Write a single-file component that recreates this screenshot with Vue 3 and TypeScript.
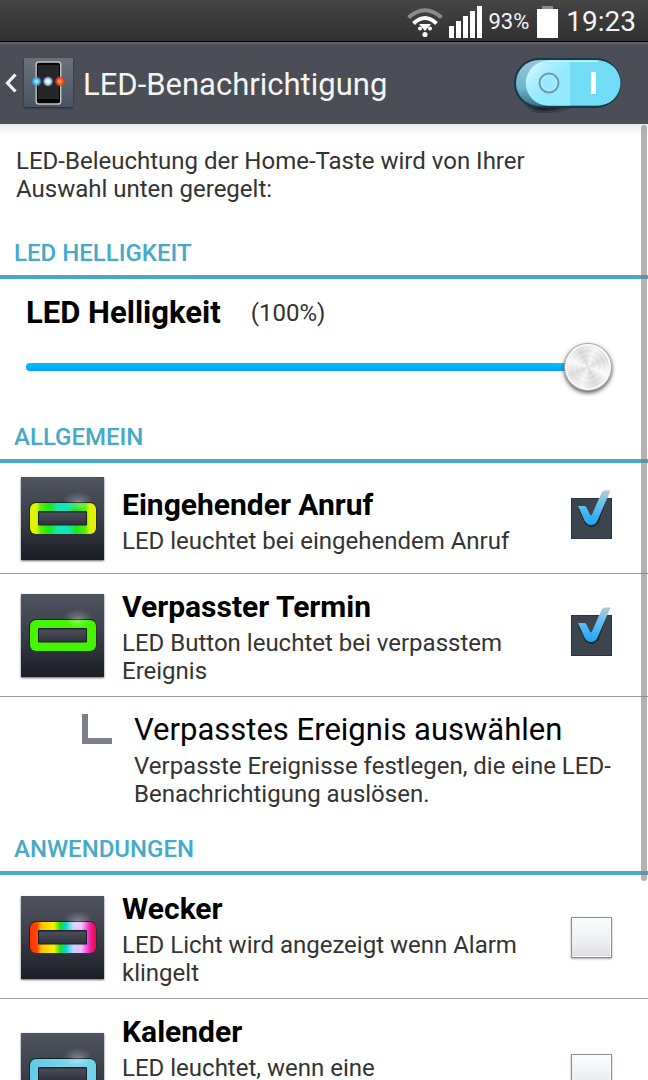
<script setup lang="ts">
import { computed, ref } from 'vue'

interface Stop { at: number; color: string }
interface Item {
  id: string
  title: string
  text: string
  on: boolean
  stops: Stop[]
}

const green: Stop[] = [
  { at: 0, color: '#45f500' },
  { at: 100, color: '#45f500' },
]
const call: Stop[] = [
  { at: 0, color: '#e8f000' },
  { at: 10, color: '#d8f500' },
  { at: 16, color: '#58f000' },
  { at: 30, color: '#1be61a' },
  { at: 42, color: '#10e8b8' },
  { at: 58, color: '#10e8b8' },
  { at: 70, color: '#1be61a' },
  { at: 84, color: '#58f000' },
  { at: 90, color: '#d8f500' },
  { at: 100, color: '#e8f000' },
]
const rainbow: Stop[] = [
  { at: 0, color: '#ff3000' },
  { at: 11, color: '#ff4a00' },
  { at: 17, color: '#ffc000' },
  { at: 36, color: '#fff000' },
  { at: 46, color: '#20e020' },
  { at: 54, color: '#00d8d0' },
  { at: 66, color: '#c8d4ff' },
  { at: 78, color: '#f0b8ff' },
  { at: 89, color: '#f030c8' },
  { at: 95, color: '#f01070' },
  { at: 100, color: '#f00c38' },
]
const sky: Stop[] = [
  { at: 0, color: '#62cbe6' },
  { at: 65, color: '#7fd6ee' },
  { at: 100, color: '#70d0ea' },
]

const general = ref<Item[]>([
  { id: 'call', title: 'Eingehender Anruf', text: 'LED leuchtet bei eingehendem Anruf', on: true, stops: call },
  { id: 'missed', title: 'Verpasster Termin', text: 'LED Button leuchtet bei verpasstem Ereignis', on: true, stops: green },
])
const apps = ref<Item[]>([
  { id: 'alarm', title: 'Wecker', text: 'LED Licht wird angezeigt wenn Alarm klingelt', on: false, stops: rainbow },
  { id: 'calendar', title: 'Kalender', text: 'LED leuchtet, wenn eine Kalenderbenachrichtigung ausgelöst wird', on: false, stops: sky },
])
const groups = computed(() => [
  { name: 'Allgemein', items: general.value, sub: true },
  { name: 'Anwendungen', items: apps.value, sub: false },
])

const brightness = ref(100)
const enabled = ref(true)
</script>

<template>
  <div class="screen">
    <div class="status">
      <svg class="wifi" width="36" height="30" viewBox="0 0 36 30">
        <path d="M1.500 9.500Q18 -5 34.500 9.500" fill="none" stroke="#8b8b8b" stroke-width="4" />
        <path d="M6.500 15.500Q18 4.500 29.500 15.500" fill="none" stroke="#fff" stroke-width="4" />
        <path d="M12 16H24L18 23Z" fill="#fff" />
        <circle cx="13" cy="20.500" r="2" fill="#fff" />
        <circle cx="23" cy="20.500" r="2" fill="#fff" />
        <circle cx="18" cy="26.500" r="2.600" fill="#fff" />
      </svg>
      <svg class="signal" width="33" height="32" viewBox="0 0 33 32">
        <path d="M0 20h5v12H0zM7 15h5v17H7zM14 10h5v22h-5zM21 5h5v27h-5zM28 0h5v32h-5z" fill="#fff" />
      </svg>
      <span class="percent">93%</span>
      <svg class="battery" width="21" height="32" viewBox="0 0 21 32">
        <path d="M5 0h11v3H5z" fill="#8b8b8b" />
        <path d="M0 3h21v29H0z" fill="#fff" />
      </svg>
      <span class="time">19:23</span>
    </div>

    <header class="bar">
      <button class="back" type="button" aria-label="Zurück">
        <svg width="12" height="20" viewBox="0 0 12 20">
          <path d="M10.500 1.500L2.500 10L10.500 18.500" fill="none" stroke="#f2f2f2" stroke-width="3.200" />
        </svg>
      </button>
      <svg class="appicon" width="49" height="49" viewBox="0 0 49 49">
        <defs>
          <linearGradient id="tile" x1="0" y1="0" x2="0" y2="1">
            <stop offset="0" stop-color="#6a717b" />
            <stop offset="1" stop-color="#495462" />
          </linearGradient>
          <radialGradient id="orbBlue">
            <stop offset="0" stop-color="#b8ecff" />
            <stop offset="0.600" stop-color="#4cb8e8" />
            <stop offset="1" stop-color="#2a90c8" stop-opacity="0.400" />
          </radialGradient>
          <radialGradient id="orbWhite">
            <stop offset="0" stop-color="#fff" />
            <stop offset="0.550" stop-color="#b4e6f5" />
            <stop offset="1" stop-color="#9a80d8" stop-opacity="0.500" />
          </radialGradient>
          <radialGradient id="orbRed">
            <stop offset="0" stop-color="#ffb060" />
            <stop offset="0.500" stop-color="#ff6010" />
            <stop offset="1" stop-color="#e02808" stop-opacity="0.600" />
          </radialGradient>
        </defs>
        <rect width="49" height="49" fill="url(#tile)" />
        <rect x="12.200" y="4" width="24.500" height="42" rx="2.500" fill="#050505" stroke="#c4c6c8" stroke-width="1.400" />
        <rect x="14" y="7" width="21" height="34" fill="#252628" />
        <circle cx="12.500" cy="23.500" r="5" fill="url(#orbBlue)" />
        <circle cx="24" cy="23.500" r="5" fill="url(#orbWhite)" />
        <circle cx="36" cy="23.500" r="5" fill="url(#orbRed)" />
      </svg>
      <h1>LED-Benachrichtigung</h1>
      <button class="switch" :class="{ off: !enabled }" type="button" role="switch" :aria-checked="enabled" aria-label="LED-Benachrichtigung" @click="enabled = !enabled">
        <svg width="108" height="60" viewBox="0 0 108 60">
          <defs>
            <linearGradient id="side" x1="0" y1="0" x2="0" y2="1">
              <stop offset="0" stop-color="#9cc8da" />
              <stop offset="0.600" stop-color="#70b4cc" />
              <stop offset="1" stop-color="#3a6a80" />
            </linearGradient>
            <linearGradient id="face" x1="0" y1="0" x2="0.600" y2="0.550">
              <stop offset="0" stop-color="#f2fcff" />
              <stop offset="0.500" stop-color="#b0eefc" />
              <stop offset="1" stop-color="#94eafd" />
            </linearGradient>
            <filter id="soft"><feGaussianBlur stdDeviation="2" /></filter>
          </defs>
          <path d="M6 34Q12 60 33 58Q50 56 60 50L24 44Z" fill="#14171c" filter="url(#soft)" />
          <rect x="1" y="6" width="105" height="48" rx="24" fill="url(#side)" stroke="#123c4c" stroke-width="2" />
          <path d="M84 7.500H34A22 22 0 0 0 34 52.500H84A22 22 0 0 0 84 7.500Z" fill="#72dcf6" />
          <path d="M56 7.500H34.500A22.500 22.500 0 0 0 34.500 52.500H56Z" fill="url(#face)" />
          <path d="M34 8.200H84" stroke="#c8f6ff" stroke-width="1.500" />
          <circle cx="35" cy="30" r="9.500" fill="#98e9fa" stroke="#6a9cb0" stroke-width="2" />
          <circle cx="35" cy="30" r="7.500" fill="none" stroke="#b8f2fc" stroke-width="1" />
          <path d="M77 19h5v22h-5z" fill="#fff" />
        </svg>
      </button>
    </header>

    <main class="content">
      <p class="intro">LED-Beleuchtung der Home-Taste wird von Ihrer Auswahl unten geregelt:</p>

      <section>
        <h2>LED Helligkeit</h2>
        <div class="brightness">
          <div class="caption">
            <label for="brightness" class="title">LED Helligkeit</label>
            <output for="brightness" class="value">({{ brightness }}%)</output>
          </div>
          <input id="brightness" v-model.number="brightness" class="slider" type="range" min="0" max="100" :style="{ '--fill': brightness + '%' }" />
        </div>
      </section>

      <section v-for="group in groups" :key="group.name">
        <h2>{{ group.name }}</h2>
        <label v-for="item in group.items" :key="item.id" class="row">
          <svg class="led" width="83" height="83" viewBox="0 0 83 83">
            <defs>
              <linearGradient :id="'bg-' + item.id" x1="0" y1="0" x2="0" y2="1">
                <stop offset="0" stop-color="#50545e" />
                <stop offset="0.450" stop-color="#3c404a" />
                <stop offset="1" stop-color="#1b1e25" />
              </linearGradient>
              <linearGradient :id="'ring-' + item.id">
                <stop v-for="s in item.stops" :key="s.at" :offset="s.at + '%'" :stop-color="s.color" />
              </linearGradient>
              <radialGradient :id="'glow-' + item.id">
                <stop offset="0" stop-color="#fff" stop-opacity="0.300" />
                <stop offset="1" stop-color="#fff" stop-opacity="0" />
              </radialGradient>
              <linearGradient :id="'in-' + item.id" x1="0" y1="0" x2="0" y2="1">
                <stop offset="0" stop-color="#4b4e58" />
                <stop offset="1" stop-color="#30333d" />
              </linearGradient>
            </defs>
            <rect width="83" height="83" :fill="'url(#bg-' + item.id + ')'" />
            <ellipse cx="57" cy="25" rx="15" ry="10" :fill="'url(#glow-' + item.id + ')'" />
            <rect x="8" y="25" width="67.500" height="32" rx="7" fill="#17231c" />
            <rect x="9" y="26" width="66" height="31" rx="6" :fill="'url(#ring-' + item.id + ')'" />
            <rect x="17" y="34" width="49" height="14.500" rx="1" fill="#1c2028" />
            <rect x="18" y="35.500" width="47" height="12" :fill="'url(#in-' + item.id + ')'" />
            <ellipse cx="57" cy="28" rx="12" ry="5" :fill="'url(#glow-' + item.id + ')'" />
          </svg>
          <span class="text">
            <span class="title">{{ item.title }}</span>
            <span class="desc">{{ item.text }}</span>
          </span>
          <span class="check">
            <input v-model="item.on" type="checkbox" />
            <svg v-if="item.on" class="tick" width="42" height="50" viewBox="0 0 42 50">
              <defs>
                <linearGradient :id="'tick-' + item.id" x1="0" y1="0" x2="0" y2="1">
                  <stop offset="0" stop-color="#b9c8cc" />
                  <stop offset="0.350" stop-color="#6cc4ee" />
                  <stop offset="1" stop-color="#1ea4f8" />
                </linearGradient>
              </defs>
              <path d="M7 19H15L21 29L31 9H36L27.500 34Q20 42 13.500 34Z" fill="#1e262e" />
              <path d="M7 17H13.500Q15 17 15.500 18.500L19 25.500Q20 27.500 21 25.500L30.500 4Q31.500 1.500 34 1.500H39.500L26.500 31.500Q24.500 36 20 36Q16 36 13.500 31.500Z" :fill="'url(#tick-' + item.id + ')'" />
            </svg>
          </span>
        </label>
        <button v-if="group.sub" class="subrow" type="button">
          <span class="elbow"></span>
          <span class="text">
            <span class="title">Verpasstes Ereignis auswählen</span>
            <span class="desc">Verpasste Ereignisse festlegen, die eine LED-Benachrichtigung auslösen.</span>
          </span>
        </button>
      </section>
    </main>
    <div class="scrollbar"></div>
  </div>
</template>

<style>
body {
  background: #fff;
}
</style>

<style scoped>
.screen {
  position: relative;
  display: flex;
  flex-direction: column;
  height: 100vh;
  overflow: hidden;
  background: #fff;
  color: #000;
  font-family: Roboto, "Noto Sans", sans-serif;
}
.screen * {
  box-sizing: border-box;
}
button {
  border: 0;
  padding: 0;
  background: none;
  font: inherit;
  color: inherit;
  text-align: left;
}
svg {
  display: block;
  flex: none;
}
.status {
  display: flex;
  flex: none;
  align-items: center;
  justify-content: flex-end;
  height: 42px;
  padding: 2px 12px 0 0;
  border-bottom: 1px solid #050505;
  background: linear-gradient(#454545, #303030);
  color: #f4f4f4;
}
.wifi {
  margin-top: 3px;
}
.signal {
  margin: 0 6px;
}
.percent {
  font-size: 22px;
}
.battery {
  margin: 0 8px;
}
.time {
  font-size: 28px;
}
.bar {
  display: flex;
  flex: none;
  align-items: center;
  height: 82px;
  padding: 0 26px 3px 5px;
  border-top: 2px solid #5f6166;
  background: #4b4e56;
  color: #f4f4f4;
}
.appicon {
  margin: 0 10px 0 7px;
  box-shadow: 0 1px 2px #24282e;
}
h1 {
  flex: 1;
  margin: 0;
  padding-top: 3px;
  font-size: 31px;
  font-weight: 400;
}
.switch.off {
  filter: grayscale(1);
}
.content {
  flex: 1;
  min-height: 0;
  overflow-y: auto;
  scrollbar-width: none;
  background: linear-gradient(#ececec, #fff 12px);
}
.intro {
  margin: 0;
  padding: 23px 80px 36px 16px;
  color: #333;
  font-size: 24px;
  line-height: 28px;
}
h2 {
  margin: 0 0 1px;
  padding: 0 14px 8px;
  border-bottom: 4px solid #45a9c8;
  color: #45a9c8;
  font-size: 24px;
  font-weight: 500;
  line-height: 28px;
  text-transform: uppercase;
}
.title {
  font-size: 30px;
  font-weight: 700;
  line-height: 36px;
}
.brightness {
  padding: 15px 37px 33px 26px;
}
.caption {
  display: flex;
  align-items: center;
  gap: 30px;
}
.caption .title {
  font-size: 31px;
}
.value {
  color: #333;
  font-size: 24px;
}
.slider {
  display: block;
  width: 100%;
  height: 46px;
  margin: 13px 0 0;
  appearance: none;
  background: none;
}
.slider::-webkit-slider-runnable-track {
  height: 8px;
  border-radius: 4px;
  background: linear-gradient(#00c4ff, #009cff) 0 0 / var(--fill) 100% no-repeat, #c8c8c8;
}
.slider::-webkit-slider-thumb {
  width: 46px;
  height: 46px;
  margin-top: -19px;
  appearance: none;
  border: 2px solid #f8f8f8;
  border-radius: 50%;
  background:
    conic-gradient(from 20deg, #fff9, #d0d0d066, #fffc, #c8c8c866, #fff9, #d0d0d066, #fffc, #c8c8c866, #fff9),
    repeating-radial-gradient(circle, #dedede 0 2px, #ebebeb 3px 5px);
  box-shadow: 0 0 0 1px #aaa, 0 2px 4px 1px #555;
}
.row {
  display: flex;
  align-items: center;
  min-height: 110px;
  padding: 0 36px 0 21px;
  border-bottom: 1px solid #96999e;
}
.led {
  box-shadow: 0 1px 2px #666;
}
.text {
  display: flex;
  flex: 1;
  flex-direction: column;
  gap: 4px;
  min-width: 0;
}
.row .text {
  padding: 15px 48px 11px 18px;
}
.desc {
  color: #333;
  font-size: 24px;
  line-height: 28px;
}
.check {
  position: relative;
  flex: none;
}
.check input {
  display: block;
  width: 41px;
  height: 41px;
  margin: 0;
  appearance: none;
  border: 1px solid #8c8e90;
  background: linear-gradient(#fafdfd, #eceff2 60%, #dedee2);
  box-shadow: 0 1px 2px #aaa, inset -1px -1px #fff;
}
.check input:checked {
  border-color: #2c343d;
  background: #3c444e;
  box-shadow: none;
}
.tick {
  position: absolute;
  bottom: 0;
  left: 0;
}
.subrow {
  display: flex;
  align-items: flex-start;
  width: 100%;
  padding: 15px 24px 27px 82px;
}
.subrow .title {
  font-size: 31px;
  font-weight: 400;
}
.elbow {
  flex: none;
  width: 30px;
  height: 30px;
  margin: 2px 22px 0 0;
  border: solid #7b7f88;
  border-width: 0 0 6px 6px;
}
.scrollbar {
  position: absolute;
  top: 125px;
  right: 1px;
  width: 6px;
  height: 70%;
  border-radius: 3px;
  background: #80808099;
}
</style>
